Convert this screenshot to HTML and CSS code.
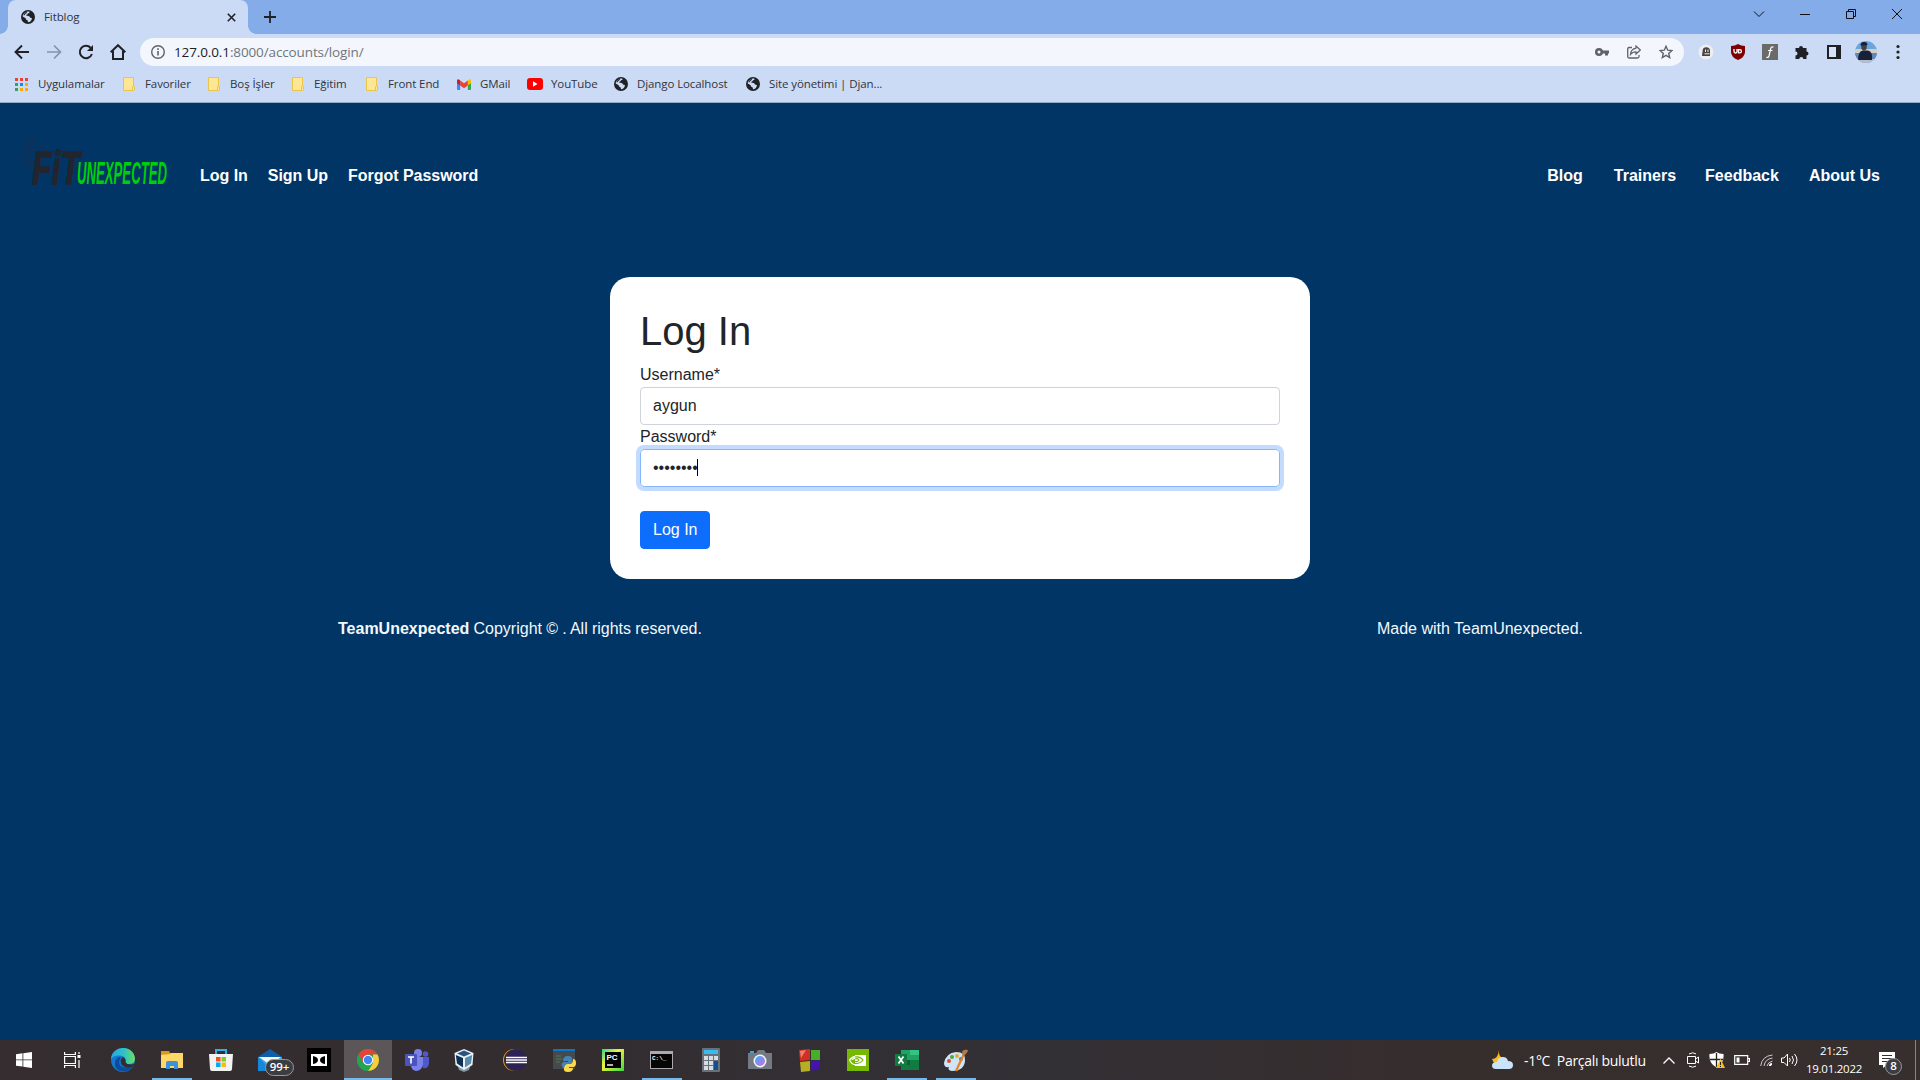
FILE: index.html
```html
<!DOCTYPE html>
<html lang="tr">
<head>
<meta charset="utf-8">
<title>Fitblog</title>
<link rel="stylesheet" href="styles.css">
</head>
<body>
<svg class="defs" aria-hidden="true">
  <symbol id="globe" viewBox="0 0 14 14"><circle cx="7" cy="7" r="7" fill="#202124"/><path d="M8.3 1.6C9 2.6 8.2 3.2 7.2 3.3 6.6 3.5 6.8 4.4 6 4.6 5.200 4.700 5 5.300 5.600 5.800 6.600 6 8.400 5.700 8.700 7 8.900 7.800 10.600 7.500 11 8.400 10.500 10.500 9 12 7 12.300 6.800 11 6.900 10.200 5.800 10 4.800 9.800 5.200 8.400 4.300 7.900L1.700 6.500C2 3.700 5 1 8.300 1.600Z" fill="#cbdbf6"/><path d="M2.500 5.300C4 6 3.800 4 5 3.600 5.800 3.200 5.500 2.300 6.500 1.700 4.600 1.800 3 3.200 2.500 5.300Z" fill="#202124"/></symbol>
  <symbol id="folder" viewBox="0 0 14 16"><path d="M.5 1.500h10v13H.5z" fill="#ffe694" stroke="#e9c64b"/><path d="M9.500 14.500V11q0-1 1-1t1 1v2.500q0 1-1 1z" fill="#ffe694" stroke="#e9c64b"/></symbol>
</svg>

<header class="browser">
  <div class="tabstrip">
    <div class="tab">
      <svg class="tab-icon" width="14" height="14"><use href="#globe"/></svg>
      <span class="tab-title">Fitblog</span>
      <svg class="tab-close" width="9" height="9" viewBox="0 0 9 9"><path d="M.8.8l7.400 7.400M8.200.8L.8 8.200" stroke="#202124" stroke-width="1.600"/></svg>
    </div>
    <svg class="new-tab" width="12" height="12" viewBox="0 0 12 12"><path d="M6 0v12M0 6h12" stroke="#202124" stroke-width="1.800"/></svg>
    <div class="window-controls">
      <svg width="46" height="28" viewBox="0 0 46 28"><path d="M18 11.500l5 5 5-5" fill="none" stroke="#111"/></svg>
      <svg width="46" height="28" viewBox="0 0 46 28"><path d="M18 14.500h10" stroke="#111"/></svg>
      <svg width="46" height="28" viewBox="0 0 46 28"><path d="M18.500 11.500h7v7h-7zM20.500 11.500v-2h7v7h-2" fill="none" stroke="#111"/></svg>
      <svg width="46" height="28" viewBox="0 0 46 28"><path d="M18 9l10 10M28 9l-10 10" stroke="#111"/></svg>
    </div>
  </div>

  <div class="toolbar">
    <div class="nav-buttons">
      <svg width="16" height="16" viewBox="0 0 16 16"><path d="M15 8H2M8 1.500L1.500 8 8 14.500" fill="none" stroke="#202124" stroke-width="1.900"/></svg>
      <svg width="16" height="16" viewBox="0 0 16 16"><path d="M1 8h13M8 1.500L14.500 8 8 14.500" fill="none" stroke="#8792a9" stroke-width="1.700"/></svg>
      <svg width="16" height="16" viewBox="0 0 16 16"><path d="M13.900 10A6.200 6.200 0 1 1 12.600 3.700" fill="none" stroke="#202124" stroke-width="2"/><path d="M15 1v6H9z" fill="#202124"/></svg>
      <svg width="16" height="16" viewBox="0 0 16 16"><path d="M.7 8.300L8 1.200l7.300 7.100M3 7v8h10V7" fill="none" stroke="#202124" stroke-width="2"/></svg>
    </div>
    <div class="omnibox">
      <svg width="14" height="14" viewBox="0 0 14 14"><circle cx="7" cy="7" r="6.300" fill="none" stroke="#5f6368" stroke-width="1.400"/><path d="M7 6v4.500M7 3.300v1.600" stroke="#5f6368" stroke-width="1.600"/></svg>
      <span class="url"><span class="host">127.0.0.1</span>:8000/accounts/login/</span>
      <div class="page-actions">
        <svg width="14" height="14" viewBox="0 0 14 14"><circle cx="4" cy="7" r="4" fill="#5f6368"/><circle cx="4" cy="7" r="1.500" fill="#f3f7fd"/><path d="M7 5.600h7v2.800h-1v2h-3v-2H7z" fill="#5f6368"/></svg>
        <svg width="14" height="14" viewBox="0 0 14 14"><path d="M5 2.500H2Q.7 2.500.7 4v7.500Q.7 13 2 13h8.500q1.500 0 1.500-1.500V10" fill="none" stroke="#5f6368" stroke-width="1.300"/><path d="M9 1l4.300 4L9 9V6.800Q5.500 6.800 3.500 9.500 4 4 9 3.200z" fill="none" stroke="#5f6368" stroke-width="1.200"/></svg>
        <svg width="14" height="14" viewBox="0 0 14 14"><path d="M7 1.300l1.700 3.900 4.200.4-3.200 2.800 1 4.200L7 10.400l-3.700 2.200 1-4.200L1.100 5.600l4.200-.4z" fill="none" stroke="#5f6368" stroke-width="1.400"/></svg>
      </div>
    </div>
    <div class="extensions">
      <svg width="16" height="16" viewBox="0 0 16 16"><circle cx="8" cy="8" r="7.500" fill="#eee"/><path d="M4 12l.6-5a3.700 3.700 0 0 1 7.400 0v5z" fill="#454545"/><path d="M7.500 5.500v2.500M10 5.500v2.500M6.500 9.800h5" stroke="#eee"/></svg>
      <svg width="16" height="16" viewBox="0 0 16 16"><path d="M8 0Q11 2 15 2v6q0 5-7 8Q1 13 1 8V2Q5 2 8 0z" fill="#800000"/><path d="M4 5v2.500a1.500 1.500 0 0 0 3 0V5M8.500 5.600v3.200h1.300a1.600 1.600 0 0 0 0-3.200z" fill="none" stroke="#fff" stroke-width="1.300"/></svg>
      <svg width="16" height="16" viewBox="0 0 16 16"><path fill="#6a6a6a" d="M0 0h16v16H0z"/><path d="M11.500 3.300Q9.500 1.800 8.600 5L7 12Q6.200 14.300 4.500 13M6 6.500h4.500" fill="none" stroke="#fff" stroke-width="1.200"/></svg>
      <svg width="16" height="16" viewBox="0 0 16 16"><path d="M1.500 4H5a2 2 0 1 1 4 0h3.500v3.500a2 2 0 1 1 0 4V15H9.300a2 2 0 0 0-4 0H1.500v-3.500a2 2 0 0 0 0-4z" fill="#202124"/></svg>
      <svg width="16" height="16" viewBox="0 0 16 16"><path d="M2 2h12v12H2z" fill="none" stroke="#202124" stroke-width="2"/><path d="M10 2h4v12h-4z" fill="#202124"/><path d="M3 3h7v10H3z" fill="#d6e2f8"/></svg>
      <svg width="22" height="22" viewBox="0 0 22 22"><defs><clipPath id="face"><circle cx="11" cy="11" r="11"/></clipPath></defs><g clip-path="url(#face)"><path fill="#6aa5df" d="M0 0h22v22H0z"/><path fill="#d5cfc1" d="M0 8h22v4H0z"/><path fill="#6288b8" d="M0 12h22v6H0z"/><path fill="#b7bdcb" d="M0 18h22v4H0z"/><path fill="#172239" d="M3 19q0-9 5-9.500h5q5 1 4 9.500z"/><path fill="#493f43" d="M6 3q3-4 6 0l-.5 5Q9 11 6.500 8z"/><path fill="#14213a" d="M5.500 4.500q0-3.500 3.500-3.500t3.500 3z"/></g></svg>
      <svg width="16" height="16" viewBox="0 0 16 16" fill="#202124"><circle cx="8" cy="2.500" r="1.600"/><circle cx="8" cy="8" r="1.600"/><circle cx="8" cy="13.500" r="1.600"/></svg>
    </div>
  </div>

  <nav class="bookmarks">
    <div class="bookmark"><svg width="13" height="13" viewBox="0 0 13 13"><path fill="#ea4335" d="M0 0h3v3H0zM5 0h3v3H5zM10 0h3v3h-3z"/><path fill="#34a060" d="M0 5h3v3H0zM0 10h3v3H0z"/><path fill="#1a86f5" d="M5 5h3v3H5z"/><path fill="#f9ab00" d="M10 5h3v3h-3zM5 10h3v3H5zM10 10h3v3h-3z"/></svg><span class="bm-apps">Uygulamalar</span></div>
    <div class="bookmark"><svg width="14" height="16"><use href="#folder"/></svg><span>Favoriler</span></div>
    <div class="bookmark"><svg width="14" height="16"><use href="#folder"/></svg><span>Boş İşler</span></div>
    <div class="bookmark"><svg width="14" height="16"><use href="#folder"/></svg><span>Eğitim</span></div>
    <div class="bookmark"><svg width="14" height="16"><use href="#folder"/></svg><span>Front End</span></div>
    <div class="bookmark"><svg width="14" height="11" viewBox="0 0 14 11"><path fill="#4285f4" d="M0 2h3.200v9H1q-1 0-1-1z"/><path fill="#34a853" d="M10.800 2H14v8q0 1-1 1h-2.200z"/><path fill="#fbbc04" d="M10.800 1.500Q14-1 14 2v2l-3.200 2.400z"/><path fill="#c5221f" d="M0 4V2q0-3 3.200-.5v4.900z"/><path fill="#ea4335" d="M3.200 1.500L7 4.300l3.800-2.800v4.900L7 9.200 3.200 6.400z"/></svg><span class="bm-site">GMail</span></div>
    <div class="bookmark"><svg width="16" height="12" viewBox="0 0 16 12"><rect width="16" height="12" rx="3" fill="red"/><path d="M6 3.300v5.400L10.500 6z" fill="#fff"/></svg><span>YouTube</span></div>
    <div class="bookmark"><svg width="14" height="14"><use href="#globe"/></svg><span class="bm-site">Django Localhost</span></div>
    <div class="bookmark"><svg width="14" height="14"><use href="#globe"/></svg><span class="bm-site">Site yönetimi | Djan...</span></div>
  </nav>
</header>

<main class="page">
  <nav class="site-nav">
    <svg class="logo" width="148" height="56" viewBox="0 0 148 56">
      <g fill="none" stroke="#17304f" stroke-width="1.500"><path d="M8 1q-4-2-5 2v5L1 14q-2 8 0 13l3 4 8 1"/><path d="M6 9q4 0 3-7M6 9v8q-2 5 3 4M9 17q0-5 4-4 3-4 6-1 3 1 3 5M6 25q5 2 8-4"/></g>
      <g transform="translate(9 49) scale(.7 1)"><text class="logo-fit">FiT</text></g>
      <g transform="translate(54 49) scale(.425 1)"><text class="logo-un">UNEXPECTED</text></g>
    </svg>
    <div class="links links-left"><a>Log In</a><a>Sign Up</a><a>Forgot Password</a></div>
    <div class="links links-right"><a>Blog</a><a class="trainers">Trainers</a><a>Feedback</a><a>About Us</a></div>
  </nav>

  <section class="card">
    <h1>Log In</h1>
    <div class="label">Username*</div>
    <div class="field">aygun</div>
    <div class="label">Password*</div>
    <div class="field focused">••••••••<i class="caret"></i></div>
    <button class="submit">Log In</button>
  </section>

  <footer class="site-footer"><p class="copyright"><b>TeamUnexpected</b> Copyright © . All rights reserved.</p><p>Made with TeamUnexpected.</p></footer>
</main>

<footer class="taskbar">
  <div class="apps">
    <div class="app"><svg width="16" height="16" viewBox="0 0 16 16" fill="#fff"><path d="M0 2.300L6.500 1.300v6.200H0zM7.300 1.200L16 0v7.500H7.300zM0 8.300h6.500v6.300L0 13.700zM7.300 8.300H16V16l-8.700-1.200z"/></svg></div>
    <div class="app task-view"><svg width="17" height="16" viewBox="0 0 17 16" fill="none" stroke="#fff" stroke-width="1.200"><path d="M.6 0v2.500h10.800V0M.6 4.500h10.800v7H.6zM.6 16v-2.500h10.800V16M15 0v2M15 8v8"/><path d="M13.500 3h3v3h-3z" fill="#fff" stroke="none"/></svg></div>
    <div class="app"><svg width="24" height="24" viewBox="0 0 24 24"><defs><linearGradient id="e1" x2="1"><stop stop-color="#27a6e5"/><stop offset=".55" stop-color="#2fc2c6"/><stop offset="1" stop-color="#6ee05f"/></linearGradient></defs><circle cx="12" cy="12" r="12" fill="#1378ce"/><path d="M0 11C1-3 22-4 24 10q0 6-6 6-5 0-3.500-3Q15 8 9 7.500 3 7 0 11z" fill="url(#e1)"/><path d="M9 11q-4 11 13 7.500-4 5-9 5Q3 23 4 14q1-5 6-5z" fill="#0c4c9c"/><path d="M12 9q-5 4 0 9 4 2.500 10 .5l2-2.500q-9 1.500-9.500-2.500 1-2-2.500-4.500z" fill="#332d30"/></svg></div>
    <div class="app running"><svg width="22" height="20" viewBox="0 0 22 20"><path d="M0 1h8l1 2h12v4H0z" fill="#d99b12"/><path d="M0 5l9-1 1-1h12v15H0z" fill="#ffd766"/><path d="M5 19v-6q0-2 2-2h8q2 0 2 2v6h-4v-3H9v3z" fill="#3992db"/></svg></div>
    <div class="app"><svg width="24" height="24" viewBox="0 0 24 24"><path d="M7 7V2h10v5" fill="none" stroke="#2db1ed" stroke-width="2"/><path d="M0 6h24l-1 15q0 2-2 2H3q-2 0-2-2z" fill="#f2f2f2"/><path d="M7 9h4.500v4.500H7z" fill="#f1511b"/><path d="M12.500 9H17v4.500h-4.500z" fill="#80cc28"/><path d="M7 14.500h4.500V19H7z" fill="#00adef"/><path d="M12.500 14.500H17V19h-4.500z" fill="#fbbc09"/></svg></div>
    <div class="app mail"><svg width="24" height="23" viewBox="0 0 24 23"><path d="M0 8L12 0l12 8z" fill="#0f5fa8"/><path d="M0 8v14h24V8z" fill="#2aa5e8"/><path d="M1 8h22l-11 8z" fill="#f5f5f5"/><path d="M0 8l14 14H0z" fill="#1687d9"/></svg><span class="badge">99+</span></div>
    <div class="app"><svg width="24" height="24" viewBox="0 0 24 24"><path d="M0 0h24v24H0z" fill="#000"/><path d="M4 6h16v12H4z" fill="#fff"/><path d="M6 8q5 1 5 4t-5 4zM18 8q-5 1-5 4t5 4z" fill="#000"/></svg></div>
    <div class="app active"><svg width="22" height="22" viewBox="0 0 22 22"><circle cx="11" cy="11" r="11" fill="#23a455"/><path d="M1.500 5.500A11 11 0 0 1 20.500 5.500H11L6.200 13.700z" fill="#e34435"/><path d="M20.500 5.500A11 11 0 0 1 11 22l5-8.500V5.500z" fill="#fdcb3c"/><path d="M1.500 5.500l5 8.500 4.500 3 5-3L11 22A11 11 0 0 1 1.500 5.500z" fill="#23a455"/><circle cx="11" cy="11" r="5.200" fill="#fff"/><circle cx="11" cy="11" r="4.200" fill="#4285f4"/></svg></div>
    <div class="app"><svg width="24" height="22" viewBox="0 0 24 22"><circle cx="20.500" cy="5" r="2.800" fill="#5059c9"/><path d="M15 8h9v7q-1 5-6 4z" fill="#5059c9"/><circle cx="13" cy="4" r="4" fill="#7b83eb"/><path d="M8 8h10v7q-1 7-7 7-5-1-5-6z" fill="#7b83eb"/><rect y="5" width="12" height="12" rx="1" fill="#4b53bc"/><path d="M3 8h6M6 8v6.500" stroke="#fff" stroke-width="1.600"/></svg></div>
    <div class="app vbox"><svg width="20" height="23" viewBox="0 0 20 23"><path d="M3 15l7 3 7-3-2 6-5 2-5-2z" fill="#8395a3"/><path d="M10 0l9.500 4-1 12L10 21 1.500 16l-1-12z" fill="#e8f3f8"/><path d="M10 1.500L17 4.500l-7 3-7-3z" fill="#2a5480"/><path d="M1.800 6L9 9v9.500l-6-4z" fill="#102f54"/><path d="M18.200 6L11 9v9.500l6-4z" fill="#5a8aaa"/></svg></div>
    <div class="app"><svg width="24" height="22" viewBox="0 0 24 22"><circle cx="11" cy="11" r="11" fill="#f7941e"/><circle cx="12" cy="11" r="11" fill="#332d30"/><circle cx="13.500" cy="11" r="10.500" fill="#2c2255"/><path d="M3 8.500h21M3 11h21M3 13.500h21" stroke="#fff" stroke-width="1.300"/></svg></div>
    <div class="app"><svg width="23" height="23" viewBox="0 0 23 23"><path d="M0 0h22v20H0z" fill="#474a4d"/><path d="M0 0h22v2H0z" fill="#0878cc"/><path d="M3 7h5M3 10h6M3 13h4" stroke="#4d7950"/><path d="M10 14v-1h5v-1h-5q0-5 5-5t4 4v3q0 2-4 2-3 0-3 3h-2q-3-5 0-5z" fill="#4284b5"/><path d="M20 10q3 0 3 4t-3 4h-4v1h4q0 4-5 4t-4-4 4-4h3q2-1 2-5z" fill="#ffd94c"/></svg></div>
    <div class="app"><svg width="22" height="22" viewBox="0 0 22 22"><defs><linearGradient id="pc" x2="1" y2="1"><stop stop-color="#26d789"/><stop offset=".4" stop-color="#eff33a"/><stop offset="1" stop-color="#3cd744"/></linearGradient></defs><path d="M0 0h22v22H0z" fill="url(#pc)"/><path d="M3 3h16v16H3z" fill="#000"/><text x="4.500" y="11" class="pc-text">PC</text><path d="M5 16h6" stroke="#fff" stroke-width="1.400"/></svg></div>
    <div class="app running"><svg width="24" height="20" viewBox="0 0 24 20"><path d="M0 1h23v18H0z" fill="#aaa"/><path d="M1 4h21v14H1z" fill="#050505"/><text x="2" y="10" class="cmd-text">C:\_</text></svg></div>
    <div class="app"><svg width="18" height="24" viewBox="0 0 18 24"><rect width="18" height="24" rx="1" fill="#697078"/><path d="M2 2h14v4H2z" fill="#35bdf2"/><path d="M2 8h4v4H2zM7 8h4v4H7zM12 8h4v4h-4zM2 13h4v4H2zM7 13h4v4H7zM2 18h4v4H2zM7 18h4v4H7z" fill="#d6dce2"/><path d="M12 13h4v9h-4z" fill="#124f8b"/></svg></div>
    <div class="app"><svg width="24" height="20" viewBox="0 0 24 20"><path d="M2 3V1h4v2z" fill="#31a4e4"/><path d="M8 3l2-3h6l2 3h6v16H0V3z" fill="#737a82"/><circle cx="12" cy="11" r="6.500" fill="#f5f5f5"/><defs><linearGradient id="lens" x2="1" y2="1"><stop stop-color="#36b1f3"/><stop offset="1" stop-color="#d36ae5"/></linearGradient></defs><circle cx="12" cy="11" r="5" fill="url(#lens)"/></svg></div>
    <div class="app"><svg width="21" height="23" viewBox="0 0 21 23"><path d="M0 1l11-1v11l-10 1z" fill="#cf3021"/><path d="M12 1h9v10h-9z" fill="#49ae27"/><path d="M1 13l10-1v10l-9 1z" fill="#b7ae26"/><path d="M12 12l9-1v9l-9 2z" fill="#4315ad"/><path d="M1 2l6-1-5 8z" fill="#eb8172"/></svg></div>
    <div class="app"><svg width="22" height="22" viewBox="0 0 22 22"><path d="M0 0h22v22H0z" fill="#76b900"/><path d="M8 6h11v11H8z" fill="#fff"/><path d="M2.500 11Q6 6.500 10 7.500M2.500 11q2.500 5 6 4.500M5 11q1-2 4-2" fill="none" stroke="#fff" stroke-width="1.300"/><path d="M8 8q5-1 8 3-3 4-8 3.500M8 10q3-1 4 1-1 2-4 1.500" fill="none" stroke="#76b900" stroke-width="1.200"/></svg></div>
    <div class="app running"><svg width="24" height="22" viewBox="0 0 24 22"><path d="M6 1h18v20H6z" fill="#21a366"/><path d="M15 1h9v5h-9z" fill="#33c481"/><path d="M6 11h9v5H6z" fill="#185c37"/><path d="M15 11h9v10H6v-5h9z" fill="#107c41"/><path d="M0 5h12v12H0z" fill="#107c41"/><path d="M3.500 7.500l5 7M8.500 7.500l-5 7" stroke="#fff" stroke-width="1.700"/></svg></div>
    <div class="app running"><svg width="24" height="23" viewBox="0 0 24 23"><path d="M0 14Q2 4 12 3q10 0 9 9-1 10-13 10-5-1-3-4-5 1-5-4z" fill="#cfe5f5"/><circle cx="5" cy="12" r="2" fill="#df4b35"/><circle cx="8" cy="8" r="2" fill="#4ba842"/><circle cx="13" cy="7" r="2" fill="#e8aa2d"/><circle cx="17" cy="10" r="2" fill="#397acc"/><path d="M20 5l-8 17" stroke="#e38227" stroke-width="2.200"/><path d="M18 4q0-4 6-3-1 4-5 6z" fill="#b27a4b"/></svg></div>
  </div>
  <div class="tray">
    <svg width="23" height="20" viewBox="0 0 23 20"><path d="M8 0q-1 7 5 8l-4 5H3L1 9q6 0 7-9z" fill="#f9bd18"/><path d="M5 19q-4 0-4-3.500T6 12q1-5 6-5 4 0 5 4 5 0 5 4t-4 4z" fill="#c9e4f9"/></svg>
    <span class="weather">-1°C&ensp;Parçalı bulutlu</span>
    <svg width="12" height="7" viewBox="0 0 12 7"><path d="M.5 6.500L6 1l5.500 5.500" fill="none" stroke="#fff" stroke-width="1.300"/></svg>
    <svg width="12" height="16" viewBox="0 0 12 16" fill="none" stroke="#fff"><path d="M2 2q4-2.500 7 0M2 14q4 2.500 7 0M.5 4.500h8v7h-8zM8.500 7l3-2v6l-3-2"/></svg>
    <svg width="16" height="16" viewBox="0 0 16 16"><path d="M7.500 0Q10 2 14.500 2q1 9-7 13.500Q-.5 11 .5 2 5 2 7.500 0z" fill="#fff"/><path d="M7.500 1v14M1 7.500h13" stroke="#222" stroke-width="1.300"/><path d="M11.500 6.500L16 16H7z" fill="#fbbd19"/><path d="M11.500 10v3M11.500 14v1" stroke="#222"/></svg>
    <svg width="16" height="10" viewBox="0 0 16 10"><path d="M.7.7h13v8.600H.7zM14 3.500h1.500v3H14" fill="none" stroke="#fff" stroke-width="1.200"/><path d="M2.500 2.500h3v5h-3z" fill="#fff"/></svg>
    <svg width="13" height="13" viewBox="0 0 13 13" fill="none"><path d="M.7 12Q2 2 12.500 1M4 12q1-7 8.500-8M7 12q1-4 5.500-5" stroke="#ccc"/><path d="M10 12q0-2 2-2" stroke="#fff" stroke-width="2"/></svg>
    <svg width="17" height="14" viewBox="0 0 17 14" fill="none" stroke="#fff"><path d="M.5 5h2.500l3.500-4v12L3 9.500H.5zM8.500 5q1.500 2 0 4M11 3q3 4 0 8M13.500 1q5 6 0 12"/></svg>
    <div class="clock"><span>21:25</span><span>19.01.2022</span></div>
    <div class="notifications"><svg width="17" height="17" viewBox="0 0 17 17"><path d="M0 0h16v13H8l-4 3v-3H0z" fill="#fff"/><path d="M3 3.500h10M3 6.500h10M3 9.500h7" stroke="#332d30"/></svg><span class="badge round">8</span></div>
  </div>
</footer>
</body>
</html>
```
FILE: styles.css
```css
* { box-sizing: border-box; }
body { margin: 0; height: 1080px; overflow: hidden; display: flex; flex-direction: column; background: #003566; font: 16px/24px "Liberation Sans", Arial, sans-serif; }
svg { display: block; flex: none; }
.defs { position: absolute; width: 0; height: 0; }

/* browser chrome */
.browser { height: 103px; background: #cbdbf6; border-bottom: 1px solid #93a9c8; font: 12px/16px "Open Sans", "Noto Sans", sans-serif; color: #30343c; }
.tabstrip { height: 34px; background: #84ace9; display: flex; padding-left: 8px; }
.tab { position: relative; width: 240px; background: #cbdbf6; border-radius: 8px 8px 0 0; display: flex; align-items: center; padding: 0 12px 0 13px; }
.tab::before, .tab::after { content: ""; position: absolute; bottom: 0; width: 8px; height: 8px; }
.tab::before { left: -8px; background: radial-gradient(circle at 0 0, transparent 7.500px, #cbdbf6 8px); }
.tab::after { right: -8px; background: radial-gradient(circle at 100% 0, transparent 7.500px, #cbdbf6 8px); }
.tab-title { margin-left: 9px; flex: 1; font-size: 11.500px; letter-spacing: -.1px; }
.new-tab { margin: 11px 0 0 16px; }
.window-controls { margin-left: auto; display: flex; }

.toolbar { height: 36px; padding-top: 4px; display: flex; }
.nav-buttons { width: 140px; padding: 6px 0 0 14px; display: flex; gap: 16px; }
.omnibox { width: 1544px; height: 28px; border-radius: 14px; background: #f3f7fd; display: flex; align-items: center; padding: 0 11px; }
.url { margin-left: 9px; font-size: 13.500px; letter-spacing: -.12px; color: #70757c; }
.host { color: #202124; }
.page-actions { margin-left: auto; display: flex; gap: 18px; }
.extensions { height: 28px; padding-left: 14px; display: flex; align-items: center; gap: 16px; }
.extensions svg:nth-child(6) { margin: 0 -3px 0 -3px; }

.bookmarks { height: 28px; padding-left: 15px; display: grid; grid-template-columns: 108px 85px 84px 74px 91px 70px 87px 132px 150px; align-items: center; }
.bookmark { display: flex; align-items: center; gap: 8px; height: 28px; font-size: 11.500px; letter-spacing: -.1px; white-space: nowrap; }
.bm-apps { margin-left: 2px; }
.bm-site { margin-left: 1px; }

/* site */
.page { flex: 1; display: flex; flex-direction: column; align-items: center; }
.site-nav { width: 100%; height: 174px; padding: 32px 40px 0 23px; display: flex; align-items: flex-start; color: #fff; font-weight: bold; }
.logo { overflow: visible; }
.logo-fit { font: italic bold 46px "Liberation Sans", Arial, sans-serif; fill: #22252e; stroke: #22252e; stroke-width: 1.500px; }
.logo-un { font: italic bold 31px "Liberation Sans", Arial, sans-serif; fill: #00ce0a; }
.links { display: flex; padding-top: 29px; }
.links-left { margin-left: 29px; gap: 20px; letter-spacing: -.03px; }
.links-right { margin-left: auto; gap: 30px; }
.trainers { margin: 0 -1px 0 1px; }
.card { width: 700px; height: 302px; padding: 30px; background: #fff; border-radius: 20px; color: #212529; }
h1 { margin: 0 0 8px; font-size: 40px; line-height: 48px; font-weight: normal; }
.field { height: 38px; padding: 6px 12px; border: 1px solid #ced4da; border-radius: 4px; display: flex; align-items: center; }
.focused { border-color: #86b7fe; box-shadow: 0 0 0 4px #c2dbfe; padding-bottom: 7px; }
.caret { width: 1px; height: 17px; margin: 0 0 1px -1px; background: #000; }
.submit { display: block; margin-top: 24px; height: 38px; padding: 6px 12px; border: 1px solid #0d6efd; border-radius: 4px; background: #0d6efd; color: #fff; font: inherit; }
.site-footer { width: 1244px; margin-top: 38px; display: flex; justify-content: space-between; color: #f4f8fb; }
.site-footer p { margin: 0 -1px 0 0; }
.copyright { word-spacing: -.25px; }

/* taskbar */
.taskbar { height: 40px; background: linear-gradient(90deg, #352d2f, #332d30 30%, #323036 52%, #362d2d 75%, #372e2e); display: flex; justify-content: space-between; color: #fff; font: 12px/16px "Open Sans", "Noto Sans", sans-serif; }
.apps { display: flex; gap: 1px; }
.app { position: relative; width: 48px; height: 40px; display: flex; align-items: center; justify-content: center; }
.task-view { width: 49px; padding-right: 3px; }
.vbox { padding-right: 4px; }
.running::after, .active::after { content: ""; position: absolute; bottom: 0; left: 4px; right: 4px; height: 2px; background: #76b9ed; }
.active { background: #5c5658; }
.active::after { left: 0; right: 0; }
.badge { position: absolute; left: 19px; top: 19px; width: 29px; height: 17px; border: 1px solid #999; border-radius: 9px; background: #3a3d41; font: 600 11.500px/14px "Open Sans", sans-serif; text-align: center; }
.pc-text { font: bold 8px "Liberation Sans", sans-serif; fill: #fff; }
.cmd-text { font: bold 6px "Liberation Mono", monospace; fill: #fff; }
.tray { width: 425px; display: grid; grid-template-columns: 33px 139px 24px 22px 25px 26px 21px 20px 66px 36px; align-items: center; border-right: 1px solid #8a8585; margin-right: 4px; }
.weather { font-size: 14px; letter-spacing: -.3px; white-space: nowrap; padding-top: 2px; }
.clock { display: flex; flex-direction: column; align-items: center; gap: 2px; font-size: 11.500px; letter-spacing: -.25px; }
.notifications { position: relative; padding-left: 12px; }
.badge.round { left: 18px; top: 6px; width: 17px; height: 17px; }
```
